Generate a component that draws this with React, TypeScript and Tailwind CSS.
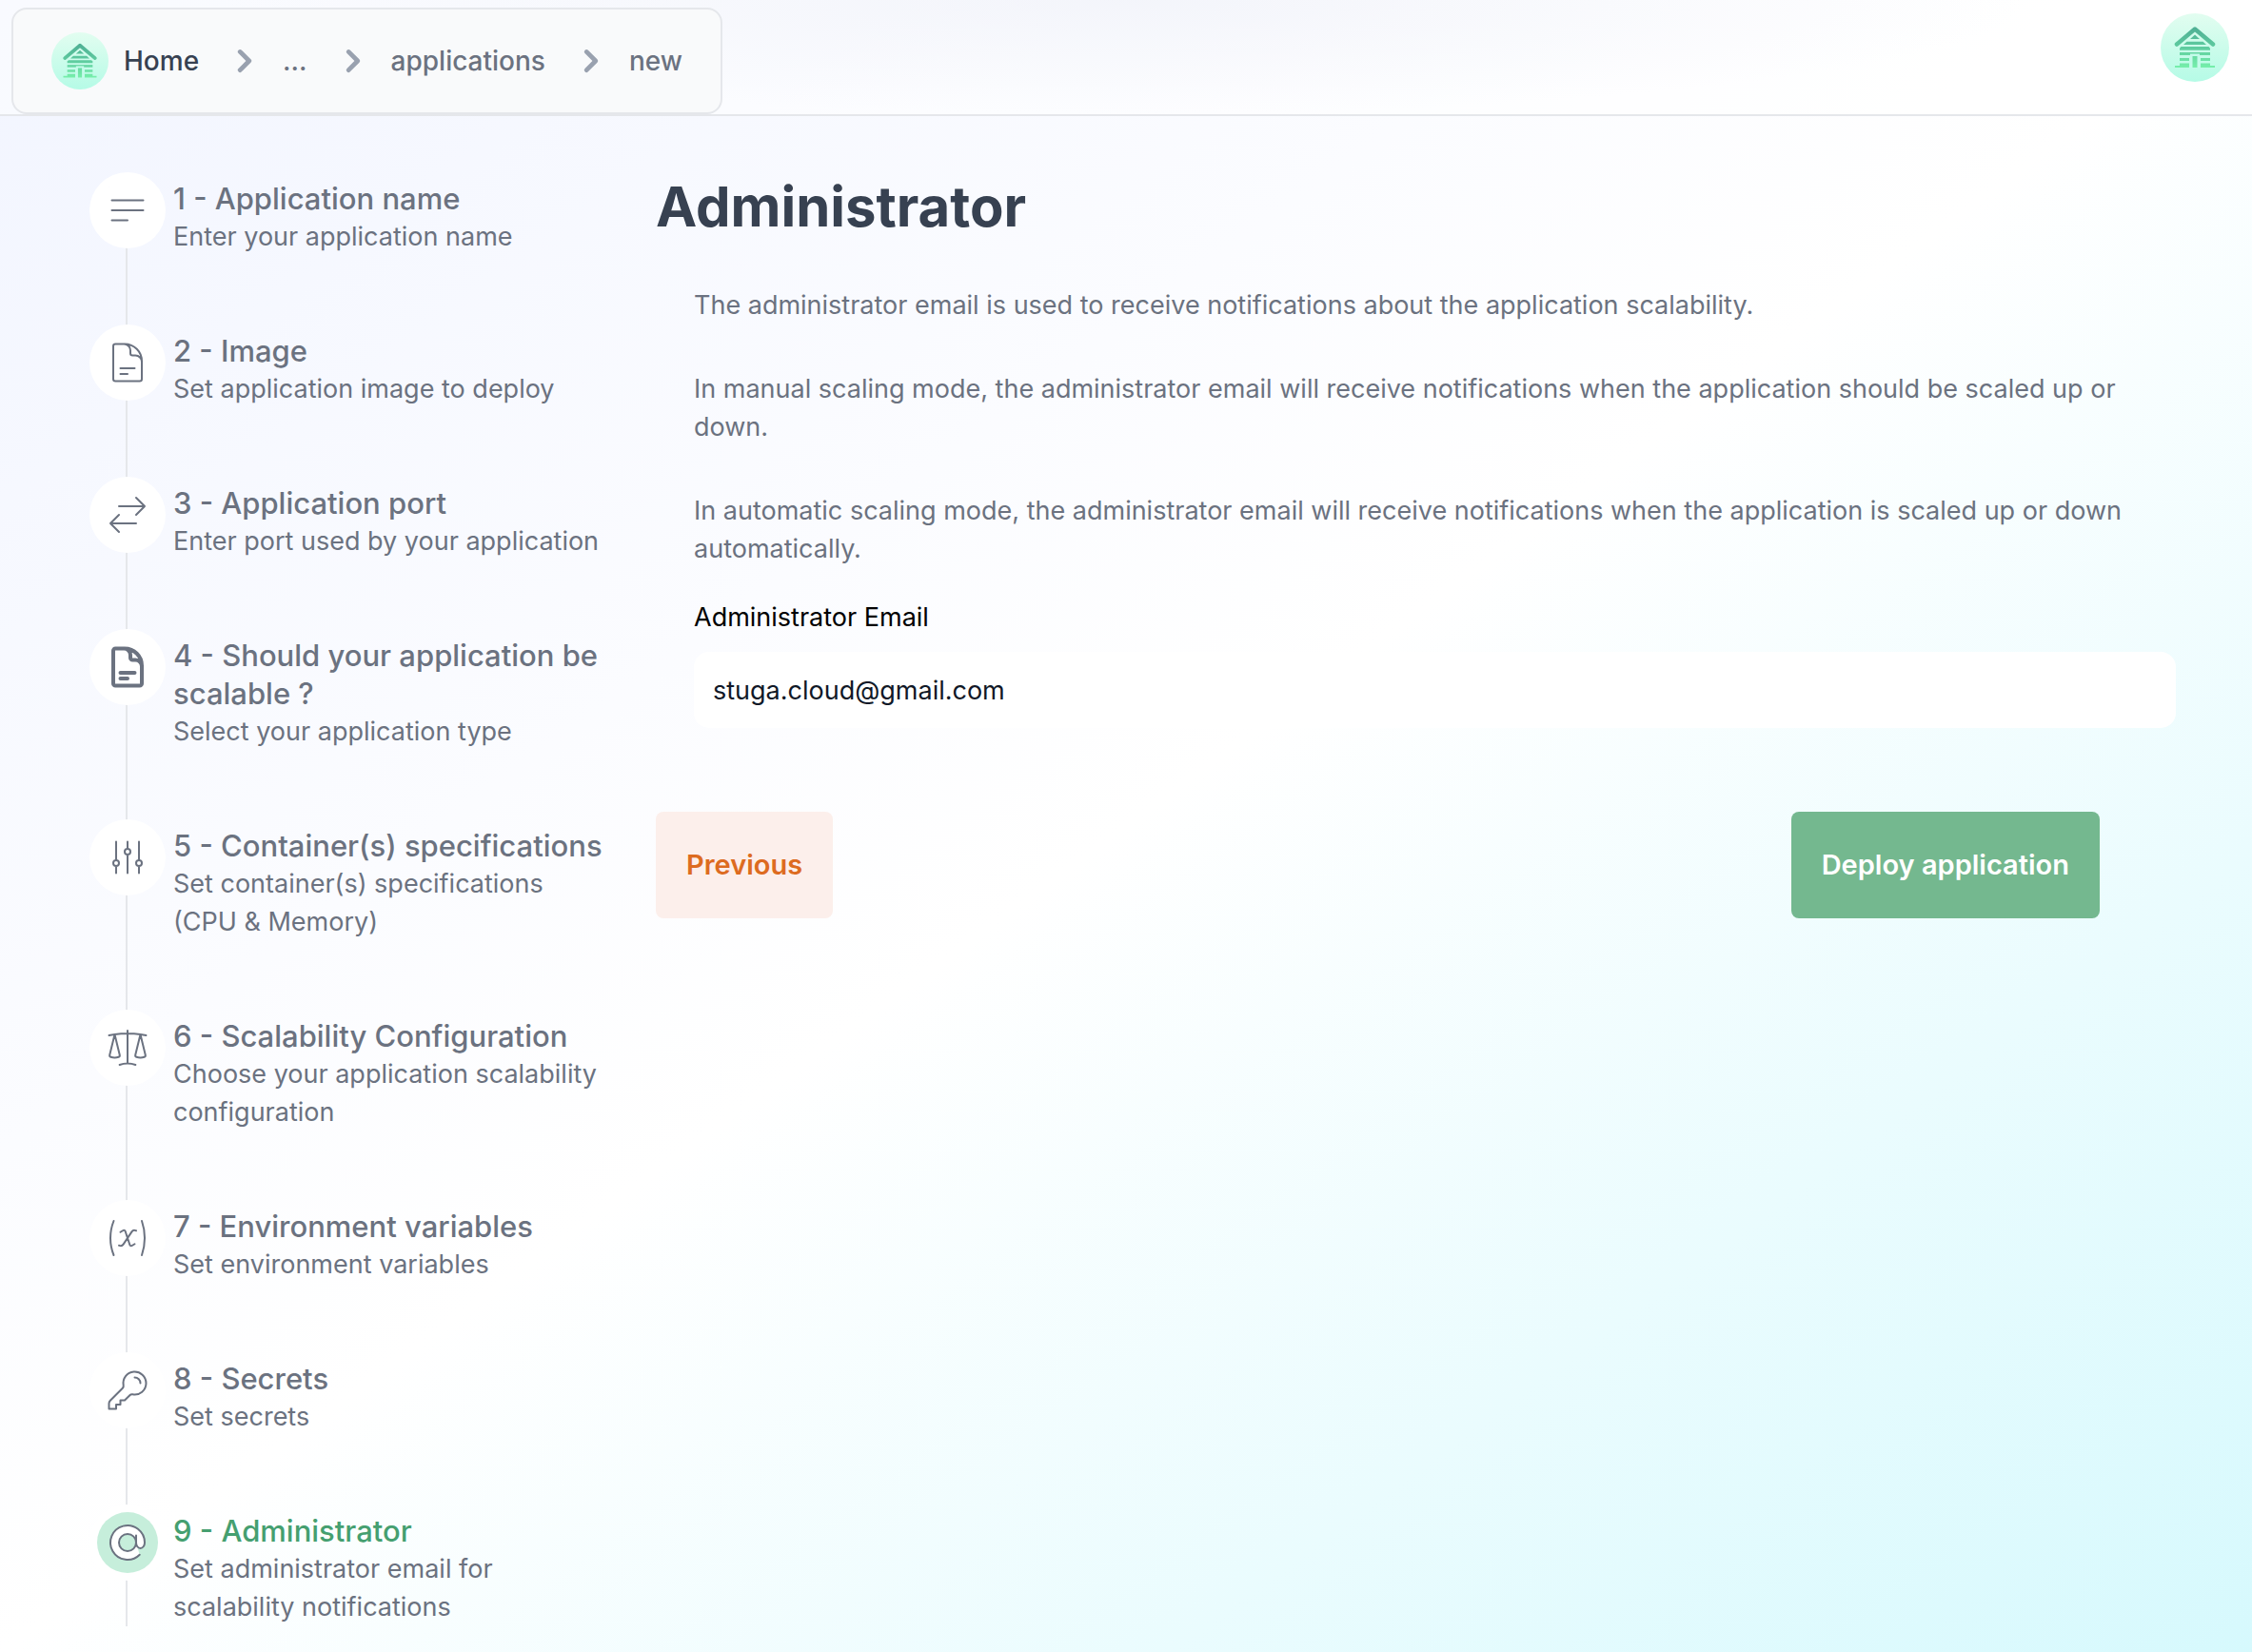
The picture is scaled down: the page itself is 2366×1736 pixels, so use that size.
import React, { useId, useState } from "react";

type Step = { title: string; text: string; paths: string[]; bold?: boolean; active?: boolean };

const documentPath =
  "M19.5 14.25v-2.625a3.375 3.375 0 0 0-3.375-3.375h-1.5A1.125 1.125 0 0 1 13.5 7.125v-1.5a3.375 3.375 0 0 0-3.375-3.375H8.25m0 12.75h7.5m-7.5 3H12M10.5 2.25H5.625c-.621 0-1.125.504-1.125 1.125v17.25c0 .621.504 1.125 1.125 1.125h12.75c.621 0 1.125-.504 1.125-1.125V11.25a9 9 0 0 0-9-9Z";

const steps: Step[] = [
  { title: "1 - Application name", text: "Enter your application name", paths: ["M3.75 6.75h16.5M3.75 12h16.5m-16.5 5.25H12"] },
  { title: "2 - Image", text: "Set application image to deploy", paths: [documentPath] },
  {
    title: "3 - Application port",
    text: "Enter port used by your application",
    paths: ["M7.5 21 3 16.5m0 0L7.5 12M3 16.5h13.5m0-13.5L21 7.5m0 0L16.5 12M21 7.5H7.5"],
  },
  { title: "4 - Should your application be scalable ?", text: "Select your application type", paths: [documentPath], bold: true },
  {
    title: "5 - Container(s) specifications",
    text: "Set container(s) specifications (CPU & Memory)",
    paths: [
      "M6 13.5V3.75m0 9.75a1.5 1.5 0 0 1 0 3m0-3a1.5 1.5 0 0 0 0 3m0 3.75V16.5m12-3V3.75m0 9.75a1.5 1.5 0 0 1 0 3m0-3a1.5 1.5 0 0 0 0 3m0 3.75V16.5m-6-9V3.75m0 3.75a1.5 1.5 0 0 1 0 3m0-3a1.5 1.5 0 0 0 0 3m0 9.75V10.5",
    ],
  },
  {
    title: "6 - Scalability Configuration",
    text: "Choose your application scalability configuration",
    paths: [
      "M12 3v17.25m0 0c-1.472 0-2.882.265-4.185.75M12 20.25c1.472 0 2.882.265 4.185.75M18.75 4.97A48.416 48.416 0 0 0 12 4.5c-2.291 0-4.545.16-6.75.47m13.5 0c1.01.143 2.01.317 3 .52m-3-.52 2.62 10.726c.122.499-.106 1.028-.589 1.202a5.988 5.988 0 0 1-2.031.352 5.988 5.988 0 0 1-2.031-.352c-.483-.174-.711-.703-.59-1.202L18.75 4.971Zm-16.5.52c.99-.203 1.99-.377 3-.52m0 0 2.62 10.726c.122.499-.106 1.028-.589 1.202a5.989 5.989 0 0 1-2.031.352 5.989 5.989 0 0 1-2.031-.352c-.483-.174-.711-.703-.59-1.202L5.25 4.971Z",
    ],
  },
  {
    title: "7 - Environment variables",
    text: "Set environment variables",
    paths: [
      "M4.745 3A23.933 23.933 0 0 0 3 12c0 3.183.62 6.22 1.745 9M19.5 3c.967 2.78 1.5 5.817 1.5 9s-.533 6.22-1.5 9M8.25 8.885l1.444-.89a.75.75 0 0 1 1.105.402l2.402 7.206a.75.75 0 0 0 1.104.401l1.445-.889m-8.25.75.213.09a1.687 1.687 0 0 0 2.062-.617l4.45-6.676a1.688 1.688 0 0 1 2.062-.618l.213.09",
    ],
  },
  {
    title: "8 - Secrets",
    text: "Set secrets",
    paths: [
      "M15.75 5.25a3 3 0 0 1 3 3m3 0a6 6 0 0 1-7.029 5.912c-.563-.097-1.159.026-1.563.43L10.5 17.25H8.25v2.25H6v2.25H2.25v-2.818c0-.597.237-1.17.659-1.591l6.499-6.499c.404-.404.527-1 .43-1.563A6 6 0 1 1 21.75 8.25Z",
    ],
  },
  {
    title: "9 - Administrator",
    text: "Set administrator email for scalability notifications",
    paths: [
      "M16.5 12a4.5 4.5 0 1 1-9 0 4.5 4.5 0 0 1 9 0Zm0 0c0 1.657 1.007 3 2.25 3S21 13.657 21 12a9 9 0 1 0-2.636 6.364M16.5 12V8.25",
    ],
    active: true,
  },
];

function Logo({ className }: { className: string }) {
  const id = useId();
  return (
    <svg viewBox="0 0 72 72" className={className} role="img" aria-label="Stuga">
      <defs>
        <linearGradient id={id + "bg"} x1="0" y1="0" x2="0" y2="1">
          <stop offset="0" stopColor="#e2fdf0" />
          <stop offset="1" stopColor="#b5fbe6" />
        </linearGradient>
        <linearGradient id={id + "fg"} gradientUnits="userSpaceOnUse" x1="0" y1="14" x2="0" y2="57">
          <stop offset="0" stopColor="#4fae94" />
          <stop offset="0.5" stopColor="#5ecb9f" />
          <stop offset="1" stopColor="#76efab" />
        </linearGradient>
      </defs>
      <circle cx="36" cy="36" r="36" fill={`url(#${id}bg)`} />
      <path d="M17 32.5 36 16.5 55 32.5" fill="none" stroke={`url(#${id}fg)`} strokeWidth="4.5" strokeLinecap="round" strokeLinejoin="round" />
      <g fill={`url(#${id}fg)`}>
        <path d="M36 22.500 41 27H31Z" />
        <path d="M27.500 29.700h17l3.500 3.200H24Z" />
        <path d="M21.500 35h29l1.500 1.500v2.200H20v-2.200Z" />
        <path d="M20 41h32v3H20Z" />
        <path d="M20 47h10v3H20ZM42 47h10v3H42Z" />
        <path d="M20 52.500h10V57H15v-2h5ZM42 52.500h10V55h5v2H42Z" />
      </g>
      <path d="M31 42.500h10V57H31Z" fill="#c4fbea" />
      <path d="M33.500 45h5v12h-5Z" fill={`url(#${id}fg)`} />
    </svg>
  );
}

function Chevron() {
  return (
    <svg viewBox="0 0 20 20" fill="currentColor" className="size-12 shrink-0 text-gray-400" aria-hidden="true">
      <path
        fillRule="evenodd"
        clipRule="evenodd"
        d="M7.293 14.707a1 1 0 0 1 0-1.414L10.586 10 7.293 6.707a1 1 0 0 1 1.414-1.414l4 4a1 1 0 0 1 0 1.414l-4 4a1 1 0 0 1-1.414 0Z"
      />
    </svg>
  );
}

function StepItem({ step }: { step: Step }) {
  return (
    <li className="-ml-[32px] flex gap-4" aria-current={step.active ? "step" : undefined}>
      <span
        className={
          "flex size-16 shrink-0 items-center justify-center rounded-full ring-8 ring-white " +
          (step.active ? "bg-[#c6eedb]" : "bg-white")
        }
      >
        <svg
          viewBox="0 0 24 24"
          fill="white"
          stroke="currentColor"
          strokeWidth={step.bold ? 2 : 1}
          strokeLinecap="round"
          strokeLinejoin="round"
          className="size-12 text-[#6b7280]"
          aria-hidden="true"
        >
          {step.paths.map((d) => (
            <path key={d} d={d} />
          ))}
        </svg>
      </span>
      <div className="flex-1">
        <h3 className={"text-[31px] leading-10 font-medium " + (step.active ? "text-[#459f70]" : "")}>{step.title}</h3>
        <p>{step.text}</p>
      </div>
    </li>
  );
}

export default function App() {
  const [email, setEmail] = useState("stuga.cloud@gmail.com");
  return (
    <div className="min-h-screen bg-linear-to-br from-[#f2f5ff] via-white to-[#d6f9fd] font-['Inter',sans-serif] text-[27px] leading-10 text-[#6b7280]">
      <header className="flex items-start justify-between border-b-2 border-[#e5e7eb] bg-white/50 bg-[radial-gradient(ellipse_40%_100%_at_50%_0%,rgba(238,240,248,0.6),transparent)] pt-2 pr-6 pl-3">
        <nav aria-label="Breadcrumb" className="rounded-2xl border-2 border-[#e5e7eb] bg-[#f9fafb] px-10 py-6">
          <ol className="flex items-center gap-6 text-[28px] leading-10 font-medium">
            <li>
              <a href="#home" className="flex items-center gap-4 text-[#374151]">
                <Logo className="size-[60px]" />
                Home
              </a>
            </li>
            {["...", "applications", "new"].map((label) => (
              <li key={label} className="flex items-center gap-4">
                <Chevron />
                <a href={"#" + label}>{label}</a>
              </li>
            ))}
          </ol>
        </nav>
        <button type="button" aria-label="Account" className="mt-[6px] rounded-full">
          <Logo className="size-[72px]" />
        </button>
      </header>

      <div className="flex gap-12 pt-[67px] pr-20 pb-6 pl-[132px]">
        <ol className="flex w-[509px] shrink-0 flex-col gap-20 border-l-2 border-[#e5e7eb]">
          {steps.map((step) => (
            <StepItem key={step.title} step={step} />
          ))}
        </ol>

        <main className="flex-1">
          <h1 className="text-[58px] leading-[56px] font-bold text-[#374151]">Administrator</h1>
          <form onSubmit={(e) => e.preventDefault()}>
            <div className="mt-14 flex flex-col pl-10">
              <div className="flex flex-col gap-12">
                <p>The administrator email is used to receive notifications about the application scalability.</p>
                <p>
                  In manual scaling mode, the administrator email will receive notifications when the application should
                  be scaled up or down.
                </p>
                <p>
                  In automatic scaling mode, the administrator email will receive notifications when the application is
                  scaled up or down automatically.
                </p>
              </div>
              <label htmlFor="email" className="mt-8 text-black">
                Administrator Email
              </label>
              <input
                id="email"
                type="email"
                value={email}
                onChange={(e) => setEmail(e.target.value)}
                className="mt-4 h-20 w-full rounded-2xl bg-white px-5 text-[#111827]"
              />
            </div>
            <div className="mt-[88px] flex justify-between pr-20 text-[29px] font-semibold">
              <button type="button" className="h-28 rounded-lg bg-[#fcefeb] px-8 text-[#dd6b20]">
                Previous
              </button>
              <button type="submit" className="h-28 rounded-lg bg-[#74b88f] px-8 text-white">
                Deploy application
              </button>
            </div>
          </form>
        </main>
      </div>
    </div>
  );
}
